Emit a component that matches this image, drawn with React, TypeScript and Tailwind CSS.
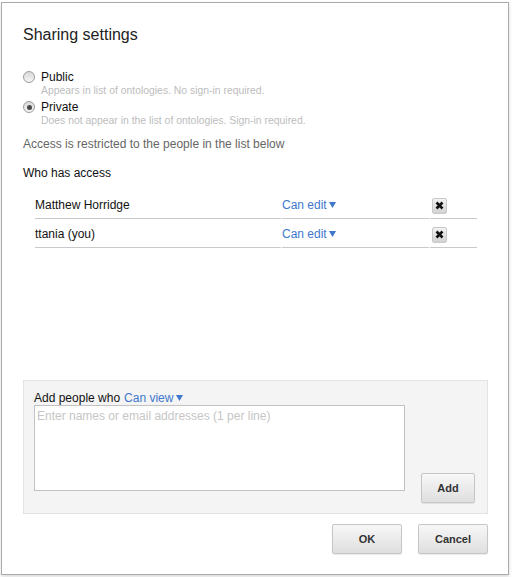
import React, { useState } from 'react';

type Person = { name: string; role: string };

const people: Person[] = [
  { name: 'Matthew Horridge', role: 'Can edit' },
  { name: 'ttania (you)', role: 'Can edit' },
];

const Caret: React.FC = () => (
  <svg width="7" height="6" viewBox="0 0 7 6" className="inline-block">
    <polygon points="0,0 7,0 3.5,6" fill="currentColor" />
  </svg>
);

const Radio: React.FC<{ checked: boolean; label: string; hint: string }> = ({ checked, label, hint }) => (
  <div className="flex">
    <div className="mt-[1px] flex h-[12px] w-[12px] items-center justify-center rounded-full border border-[#9c9c9c] bg-gradient-to-b from-[#d9d9d9] to-[#f5f5f5]">
      {checked && <div className="h-[5px] w-[5px] rounded-full bg-[#4a4a4a]" />}
    </div>
    <div className="ml-[6px] flex flex-col">
      <span className="text-[12px] leading-[15px] text-[#111]">{label}</span>
      <span className="text-[10.4px] leading-[12px] text-[#bdbdbd]">{hint}</span>
    </div>
  </div>
);

const GrayButton: React.FC<{ label: string; className?: string }> = ({ label, className }) => (
  <button
    className={
      'h-[30px] rounded-[2px] border border-[#c6c6c6] bg-gradient-to-b from-[#f7f7f7] to-[#dfdfdf] text-[11px] font-bold text-[#333] shadow-[0_1px_1px_rgba(0,0,0,0.08)] ' +
      (className ?? '')
    }
  >
    {label}
  </button>
);

export default function App() {
  const [text, setText] = useState('');

  return (
    <div className="h-[577px] w-[512px] bg-white font-['Liberation_Sans',Arial,sans-serif]">
      <div className="ml-px mt-[2px] flex h-[573px] w-[508px] flex-col border border-[#ababab] bg-white pb-[20px] pl-[21px] pr-[20px] shadow-[0_2px_4px_rgba(0,0,0,0.15)]">
        <h1 className="mt-[22px] text-[16px] leading-[20px] text-[#222]">Sharing settings</h1>

        {/* visibility */}
        <div className="mt-[25px] flex flex-col gap-[3px]">
          <Radio checked={false} label="Public" hint="Appears in list of ontologies. No sign-in required." />
          <Radio checked label="Private" hint="Does not appear in the list of ontologies. Sign-in required." />
        </div>

        <p className="mt-[10px] text-[12px] leading-[15px] text-[#666]">
          Access is restricted to the people in the list below
        </p>
        <p className="mt-[14px] text-[12px] leading-[15px] text-[#111]">Who has access</p>

        <div className="ml-[12px] mt-[9px] flex flex-col">
          {people.map(p => (
            <div key={p.name} className="flex gap-px">
              <div className="flex h-[29px] w-[246px] items-center border-b border-[#c9c9c9] pt-[2px] text-[12px] leading-[15px] text-[#111]">
                {p.name}
              </div>
              <div className="flex h-[29px] w-[147px] items-center gap-[2px] border-b border-[#c9c9c9] pt-[2px] text-[12px] leading-[15px] text-[#3f77cd]">
                {p.role}
                <Caret />
              </div>
              <div className="flex h-[29px] w-[47px] items-center border-b border-[#c9c9c9]">
                <button className="ml-[2px] mt-[3px] flex h-[16px] w-[15px] items-center justify-center rounded-[2px] border border-[#c9c9c9] bg-gradient-to-b from-[#f2f2f2] to-[#d2d2d2]">
                  <svg width="9" height="9" viewBox="0 0 9 9">
                    <path d="M1.5 1.5 L7.5 7.5 M7.5 1.5 L1.5 7.5" stroke="#111" strokeWidth="2.6" />
                  </svg>
                </button>
              </div>
            </div>
          ))}
        </div>

        {/* add people */}
        <div className="mt-auto flex w-[465px] items-end border border-[#e3e3e3] bg-[#f4f4f4] pb-[10px] pl-[10px] pr-[12px] pt-[10px]">
          <div className="flex flex-col">
            <div className="flex items-center text-[12px] leading-[14px] text-[#111]">
              Add people who
              <span className="ml-[4px] flex items-center gap-[3px] text-[#3f77cd]">
                Can view
                <Caret />
              </span>
            </div>
            <textarea
              value={text}
              onChange={e => setText(e.target.value)}
              placeholder="Enter names or email addresses (1 per line)"
              className="mb-[12px] h-[86px] w-[371px] resize-none border border-[#c2c2c2] bg-white px-[2px] pt-[3px] text-[12px] leading-[15px] text-[#111] outline-none placeholder:text-[#c6c6c6]"
            />
          </div>
          <GrayButton label="Add" className="ml-[16px] w-[54px]" />
        </div>

        <div className="mt-[10px] flex justify-end gap-[16px]">
          <GrayButton label="OK" className="w-[70px]" />
          <GrayButton label="Cancel" className="w-[70px]" />
        </div>
      </div>
    </div>
  );
}
